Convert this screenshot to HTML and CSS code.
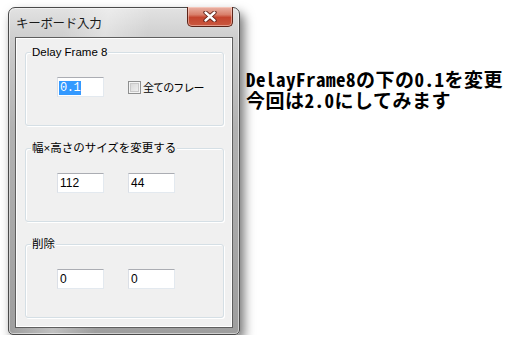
FILE: index.html
```html
<!DOCTYPE html>
<html>
    <head>
        <meta charset="utf-8">
        <title>キーボード入力</title>
        <link rel="stylesheet" href="styles.css">
    </head>
    <body>
        <div class="window">
            <div class="titlebar">
                <span class="title">キーボード入力</span>
                <button class="close">
                    <svg width="14" height="11" viewBox="0 0 14 11">
                        <path d="M2.5 1.5 L11.5 9.5 M11.5 1.5 L2.5 9.5" stroke="#5a1c12" stroke-width="4.2" stroke-linecap="round"/>
                        <path d="M2.5 1.5 L11.5 9.5 M11.5 1.5 L2.5 9.5" stroke="#ffffff" stroke-width="2.4" stroke-linecap="round"/>
                    </svg>
                </button>
            </div>
            <div class="client">
                <div class="group">
                    <span class="legend">Delay Frame 8</span>
                    <div class="row">
                        <div class="field"><span class="sel">0.1</span></div>
                        <label class="checkrow"><span class="check"></span>全てのフレー</label>
                    </div>
                </div>
                <div class="group">
                    <span class="legend">幅×高さのサイズを変更する</span>
                    <div class="row">
                        <div class="field">112</div>
                        <div class="field">44</div>
                    </div>
                </div>
                <div class="group">
                    <span class="legend">削除</span>
                    <div class="row">
                        <div class="field">0</div>
                        <div class="field">0</div>
                    </div>
                </div>
            </div>
        </div>

        <div class="note">
            <p>DelayFrame8の下の0.1を変更</p>
            <p>今回は2.0にしてみます</p>
        </div>
    </body>
</html>
```

FILE: styles.css
```css
html {
  background: #ffffff;
}

body {
  display: flex;
  align-items: flex-start;
  margin: 0;
  padding: 7px 0 0 8px;
  font: 12px "Liberation Sans", "Noto Sans CJK JP", sans-serif;
  color: #000000;
}

.window {
  width: 232px;
  height: 328px;
  box-sizing: border-box;
  border: 1px solid #4a4a4a;
  border-radius: 7px 7px 5px 5px;
  padding: 0 6px 6px;
  background:
    linear-gradient(100deg, rgba(255,255,255,0) 20%, rgba(255,255,255,0.35) 35%, rgba(255,255,255,0) 50%),
    linear-gradient(to bottom, #e2e2e2 0, #cecece 30px, #b2b2b2 120px, #9e9e9e 100%);
  box-shadow: 4px 6px 11px rgba(0, 0, 0, 0.55), inset 0 0 0 1px rgba(255,255,255,0.5);
}

.titlebar {
  display: flex;
  align-items: flex-start;
  height: 29px;
}

  .title {
    font: 12.5px "Noto Sans CJK JP", sans-serif;
    color: #1a1a1a;
    padding: 5px 0 0 1px;
    letter-spacing: -0.3px;
  }

  .close {
    display: flex;
    align-items: center;
    justify-content: center;
    margin: -1px 0 0 auto;
    width: 46px;
    height: 20px;
    padding: 0;
    border: 1px solid #5c2418;
    border-top: 0;
    border-radius: 0 0 5px 5px;
    background: linear-gradient(to bottom, #eab3a6 0%, #d9806b 40%, #c4452e 55%, #c9583f 100%);
    box-shadow: inset 0 0 0 1px rgba(255, 220, 210, 0.5);
  }

.client {
  display: flex;
  flex-direction: column;
  gap: 22px;
  height: 291px;
  box-sizing: border-box;
  border: 1px solid #5e5e5e;
  background: #f0f0f0;
  box-shadow: inset 0 0 0 1px #ffffff;
  padding: 14px 8px 0 9px;
}

.group {
  position: relative;
  height: 74px;
  box-sizing: border-box;
  border: 1px solid #d5dfe5;
  border-radius: 3px;
  box-shadow: 1px 1px 0 #ffffff, inset 1px 1px 0 #ffffff;
}

  .legend {
    position: absolute;
    top: -8px;
    left: 5px;
    padding: 0 1px;
    background: #f0f0f0;
    font-size: 11.5px;
    line-height: 14px;
    white-space: nowrap;
  }

.row {
  display: flex;
  align-items: center;
  gap: 24px;
  padding: 24px 0 0 31px;
}

.field {
  width: 47px;
  height: 20px;
  box-sizing: border-box;
  background: #ffffff;
  border: 1px solid #e3e9ef;
  border-top-color: #abadb3;
  border-left-color: #dbdfe6;
  padding: 0 0 0 2px;
  font-size: 12px;
  line-height: 18px;
}

  .sel {
    display: inline-block;
    background: #3399ff;
    color: #ffffff;
    font-family: "Liberation Mono", monospace;
    line-height: 14px;
    margin: 2px 0 0 -1px;
    padding: 0 1px;
    letter-spacing: -0.5px;
  }

.checkrow {
  display: flex;
  align-items: center;
  gap: 2px;
  font: 11px "Noto Sans CJK JP", sans-serif;
  letter-spacing: -0.9px;
}

  .check {
    width: 13px;
    height: 13px;
    box-sizing: border-box;
    border: 1px solid #8e8f8f;
    background: linear-gradient(135deg, #d3d3d3, #f4f4f4);
    box-shadow: inset 0 0 0 1px #f4f4f4, inset 0 0 0 2px #c9c9c9;
  }

.note {
  margin: 61px 0 0 6px;
  font: 700 19px/21px "Noto Sans CJK JP", sans-serif;
  font-feature-settings: "hwid" 1;
  letter-spacing: 0.5px;
}

  .note p {
    margin: 0;
    white-space: nowrap;
  }
```
